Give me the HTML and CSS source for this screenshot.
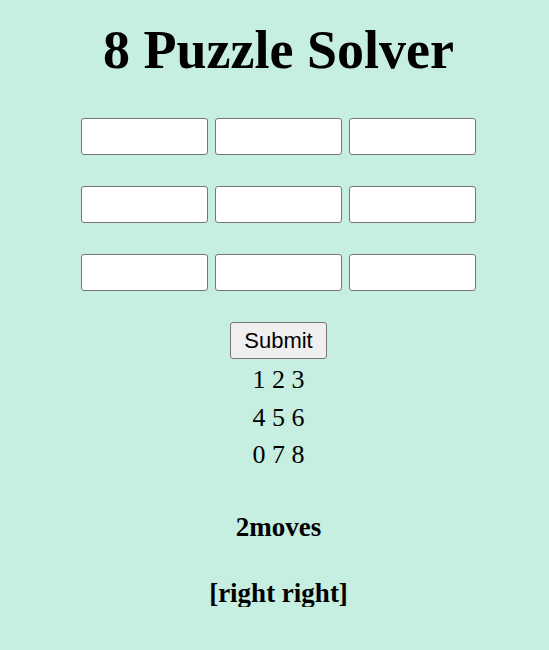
FILE: index.html
```html
<!DOCTYPE html>
<html>
<head>
<meta charset="utf-8">
<link rel="stylesheet" href="styles.css">
</head>
<body>
<div class="page">
  <h1 class="title">8 Puzzle Solver</h1>
  <form class="grid">
    <input class="cell" type="text">
    <input class="cell" type="text">
    <input class="cell" type="text">
    <input class="cell" type="text">
    <input class="cell" type="text">
    <input class="cell" type="text">
    <input class="cell" type="text">
    <input class="cell" type="text">
    <input class="cell" type="text">
  </form>
  <button class="submit" type="button">Submit</button>
  <div class="board">
    <div class="row">1 2 3</div>
    <div class="row">4 5 6</div>
    <div class="row">0 7 8</div>
  </div>
  <p class="result">2moves</p>
  <p class="result">[right right]</p>
</div>
</body>
</html>
```
FILE: styles.css
```css
html, body {
  margin: 0;
  padding: 0;
  background: #c6eee1;
}
body {
  font-family: "Liberation Serif", "Times New Roman", serif;
  color: #000;
}
.page {
  display: flex;
  flex-direction: column;
  align-items: center;
  padding-top: 20px;
  padding-left: 8px;
}
.title {
  font-size: 54px;
  font-weight: bold;
  margin: 0;
  line-height: 60px;
}
.grid {
  display: grid;
  grid-template-columns: repeat(3, 127px);
  column-gap: 7px;
  row-gap: 31px;
  margin-top: 38px;
}
.cell {
  box-sizing: border-box;
  width: 127px;
  height: 37px;
  border: 1px solid #767676;
  border-radius: 3px;
  background: #fff;
  margin: 0;
  padding: 0 4px;
}
.submit {
  box-sizing: border-box;
  margin-top: 31px;
  width: 97px;
  height: 37px;
  font-family: "Liberation Sans", Arial, sans-serif;
  font-size: 22px;
  color: #000;
  background: #efefef;
  border: 1px solid #767676;
  border-radius: 3px;
  padding: 0;
}
.board {
  font-size: 26px;
  line-height: 37.5px;
  text-align: center;
  margin-top: 2px;
}
.result {
  font-size: 27px;
  font-weight: bold;
  margin: 0;
  line-height: 28px;
}
.board + .result {
  margin-top: 39px;
}
.result + .result {
  margin-top: 38px;
}
```
